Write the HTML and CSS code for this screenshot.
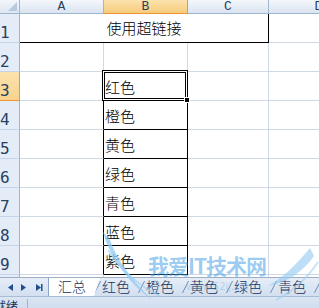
FILE: index.html
```html
<!DOCTYPE html>
<html lang="zh-CN">
<head>
<meta charset="utf-8">
<title>使用超链接</title>
<link rel="stylesheet" href="styles.css">
</head>
<body>
<div class="app">
  <div class="sheet">
    <div class="corner"><span class="tri"></span></div>
    <div class="ch">A</div>
    <div class="ch on">B</div>
    <div class="ch">C</div>
    <div class="ch">D</div>

    <div class="rh">1</div>
    <div class="c title">使用超链接</div>
    <div class="c"></div>

    <div class="rh">2</div>
    <div class="c"></div>
    <div class="c tb"></div>
    <div class="c"></div>
    <div class="c"></div>

    <div class="rh on">3</div>
    <div class="c lb"></div>
    <div class="c b act">红色<span class="sel"><span class="handle"></span></span></div>
    <div class="c"></div>
    <div class="c"></div>

    <div class="rh">4</div>
    <div class="c lb"></div>
    <div class="c b">橙色</div>
    <div class="c"></div>
    <div class="c"></div>

    <div class="rh">5</div>
    <div class="c lb"></div>
    <div class="c b">黄色</div>
    <div class="c"></div>
    <div class="c"></div>

    <div class="rh">6</div>
    <div class="c lb"></div>
    <div class="c b">绿色</div>
    <div class="c"></div>
    <div class="c"></div>

    <div class="rh">7</div>
    <div class="c lb"></div>
    <div class="c b">青色</div>
    <div class="c"></div>
    <div class="c"></div>

    <div class="rh">8</div>
    <div class="c lb"></div>
    <div class="c b">蓝色</div>
    <div class="c"></div>
    <div class="c"></div>

    <div class="rh">9</div>
    <div class="c lb"></div>
    <div class="c b">紫色</div>
    <div class="c"></div>
    <div class="c"></div>

    <div class="rh">10</div>
    <div class="c"></div>
    <div class="c"></div>
    <div class="c"></div>
    <div class="c"></div>
  </div>

  <div class="tabbar">
    <div class="nav">
      <svg width="48" height="17" viewBox="0 0 48 17">
        <path d="M13 5 L8 8.5 L13 12 Z" fill="#1f4f8f"/>
        <path d="M21 5 L26 8.5 L21 12 Z" fill="#1f4f8f"/>
        <path d="M36 5 L41 8.5 L36 12 Z" fill="#1f4f8f"/>
        <rect x="41" y="5" width="1.5" height="7" fill="#1f4f8f"/>
      </svg>
    </div>
    <div class="tabs">
      <div class="tab active">汇总</div>
      <div class="tab">红色</div>
      <div class="tab">橙色</div>
      <div class="tab">黄色</div>
      <div class="tab">绿色</div>
      <div class="tab">青色</div>
      <div class="tab"></div>
    </div>
  </div>

  <div class="status"><span class="ready">就绪</span></div>

  <div class="wm">
    <svg class="wing" width="319" height="308" viewBox="0 0 319 308">
      <path d="M103 232 C110 258 128 282 152 300 C132 280 118 262 110 240 Z" fill="#8fcaf2" opacity="0.75"/>
      <path d="M108 250 C122 270 138 286 160 296" stroke="#9fd2f4" stroke-width="1.5" fill="none" opacity="0.7"/>
      <path d="M310 248 C298 262 286 276 268 286 C290 282 304 270 314 256 Z" fill="#8fcaf2" opacity="0.6"/>
      <path d="M318 262 C306 280 292 292 276 300" stroke="#9fd2f4" stroke-width="2" fill="none" opacity="0.6"/>
    </svg>
    <span class="wm-t">我爱IT技术网</span>
    <span class="wm-u">www.52ij.com</span>
  </div>
</div>
</body>
</html>
```

FILE: styles.css
```css
html, body {
  margin: 0;
  padding: 0;
}
body {
  width: 319px;
  height: 308px;
  overflow: hidden;
  background: #ffffff;
  font-family: "Noto Sans CJK SC", "Noto Sans", sans-serif;
}
.app {
  position: relative;
  width: 319px;
  height: 308px;
  overflow: hidden;
}
.sheet {
  display: grid;
  grid-template-columns: 20px 84px 84px 81px 100px;
  grid-template-rows: 14px repeat(10, 29px);
  width: 369px;
  height: 277px;
  overflow: hidden;
}
.sheet > div {
  box-sizing: border-box;
}
.corner {
  position: relative;
  background: linear-gradient(#f3f6fb, #dde6f2);
  border-right: 1px solid #9eb6ce;
  border-bottom: 1px solid #9eb6ce;
}
.tri {
  position: absolute;
  right: 2px;
  bottom: 2px;
  width: 0;
  height: 0;
  border-left: 9px solid transparent;
  border-bottom: 9px solid #b9c9dd;
}
.ch {
  background: linear-gradient(#f4f7fb, #dbe4f1);
  border-right: 1px solid #9eb6ce;
  border-bottom: 1px solid #9eb6ce;
  text-align: center;
  font-family: "Liberation Mono", monospace;
  font-size: 13px;
  line-height: 13px;
  color: #27415f;
}
.ch.on {
  background: linear-gradient(#fbe2ad, #f6cc7c);
  border-right-color: #f29436;
  border-bottom-color: #f29436;
}
.rh {
  display: flex;
  align-items: flex-end;
  background: #e4ecf7;
  border-right: 1px solid #9eb6ce;
  border-bottom: 1px solid #c5d3e6;
  font-family: "DejaVu Sans Mono", monospace;
  font-size: 16px;
  line-height: 18px;
  color: #27415f;
  padding-left: 0;
  overflow: hidden;
}
.rh.on {
  background: linear-gradient(#fbe2ad, #f8d38c);
  border-right-color: #f29436;
  border-bottom-color: #f29436;
}
.c {
  display: flex;
  align-items: flex-end;
  border-right: 1px solid #d0d7e5;
  border-bottom: 1px solid #d0d7e5;
  padding: 0 0 4px 1px;
  font-size: 15px;
  font-weight: 300;
  line-height: 18px;
  color: #000;
  white-space: nowrap;
}
.title {
  grid-column: span 3;
  justify-content: center;
  align-items: center;
  padding: 0;
  border-right-color: #000;
  border-bottom-color: #000;
}
.tb {
  border-bottom-color: #000;
}
.lb {
  border-right-color: #000;
}
.b {
  border-right-color: #000;
  border-bottom-color: #000;
}
.act {
  position: relative;
  overflow: visible;
}
.sel {
  position: absolute;
  left: -2px;
  top: -2px;
  right: -1px;
  bottom: -1px;
  border: 1px solid #000;
  box-shadow: inset 0 0 0 1px #fff, inset 0 0 0 2px #000;
}
.handle {
  position: absolute;
  right: -3px;
  bottom: -3px;
  width: 4px;
  height: 4px;
  background: #000;
  border: 1px solid #fff;
}
.tabbar {
  display: flex;
  height: 19px;
  box-sizing: border-box;
  border-top: 1px solid #9aaec8;
  background: linear-gradient(#e6edf7, #d3dff0);
}
.nav {
  width: 48px;
  flex: none;
  border-right: 1px solid #8ea6c6;
  display: flex;
  align-items: center;
}
.nav svg {
  display: block;
}
.tabs {
  display: flex;
  flex: 1;
  align-items: stretch;
}
.tab {
  position: relative;
  width: 44px;
  flex: none;
  box-sizing: border-box;
  padding-left: 9px;
  font-size: 14px;
  font-weight: 300;
  line-height: 17px;
  color: #15305a;
  white-space: nowrap;
}
.tab::before {
  content: "";
  position: absolute;
  left: 4px;
  top: 3px;
  width: 1px;
  height: 12px;
  background: #6f8db8;
  transform: skewX(-27deg);
}
.tab.active::before {
  display: none;
}
.tab.active {
  z-index: 1;
}
.tab.active::after {
  content: "";
  position: absolute;
  left: 0;
  top: 0;
  width: 51px;
  height: 100%;
  background: #fff;
  clip-path: polygon(0 0, 51px 0, 45px 100%, 0 100%);
  z-index: -1;
}
.status {
  position: relative;
  height: 22px;
  box-sizing: border-box;
  border-top: 1px solid #a9bcd6;
  background: linear-gradient(#dbe5f3, #c7d7ee);
}
.status::after {
  content: "";
  position: absolute;
  left: 27px;
  top: 2px;
  width: 1px;
  height: 18px;
  background: #9fb4d2;
}
.ready {
  position: absolute;
  left: -6px;
  top: 1px;
  font-size: 12px;
  line-height: 16px;
  color: #1e2f4a;
}
.wm {
  position: absolute;
  left: 0;
  top: 0;
  width: 319px;
  height: 308px;
  pointer-events: none;
}
.wing {
  position: absolute;
  left: 0;
  top: 0;
}
.wm-t {
  position: absolute;
  left: 148px;
  top: 252px;
  font-size: 21px;
  font-weight: 700;
  line-height: 26px;
  letter-spacing: -1px;
  color: rgba(70, 160, 230, 0.55);
  white-space: nowrap;
}
.wm-u {
  position: absolute;
  left: 186px;
  top: 281px;
  font-family: "DejaVu Sans", sans-serif;
  font-size: 10px;
  line-height: 12px;
  color: rgba(90, 170, 230, 0.35);
  white-space: nowrap;
}
```
